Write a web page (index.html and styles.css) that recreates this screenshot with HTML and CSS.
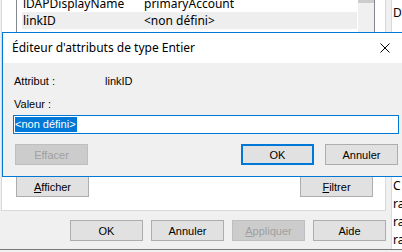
FILE: index.html
```html
<!DOCTYPE html>
<html lang="fr">
  <head>
    <meta charset="UTF-8" />
    <title>Éditeur d'attributs de type Entier</title>
    <link rel="stylesheet" href="styles.css">
  </head>
  <body>
    <div class="screen">
      <!-- Property window behind the dialog -->
      <div class="props">
        <div class="props-main">
          <div class="panel">
            <div class="list-wrap">
              <div class="list">
                <div class="row"><span class="col-name">lDAPDisplayName</span><span>primaryAccount</span></div>
                <div class="row selected"><span class="col-name">linkID</span><span>&lt;non défini&gt;</span></div>
              </div>
              <div class="scrollbar"><div class="thumb"></div></div>
            </div>
            <div class="panel-actions">
              <button class="btn"><u>A</u>fficher</button>
              <button class="btn"><u>F</u>iltrer</button>
            </div>
          </div>
          <div class="footer">
            <button class="btn">OK</button>
            <button class="btn">Annuler</button>
            <button class="btn disabled"><u>A</u>ppliquer</button>
            <button class="btn">Aide</button>
          </div>
        </div>
        <div class="side">
          <div class="side-text top">Do</div>
          <div class="side-text first">C</div>
          <div class="side-text">rat</div>
          <div class="side-text">rat</div>
          <div class="side-text">rat</div>
        </div>
      </div>

      <!-- Integer attribute editor dialog -->
      <div class="dialog">
        <div class="titlebar">
          <span class="title">Éditeur d'attributs de type Entier</span>
          <svg class="close" width="10" height="10" viewBox="0 0 10 10">
            <path d="M0.5 0.5 L9.5 9.5 M9.5 0.5 L0.5 9.5" stroke="#000" stroke-width="1" fill="none"/>
          </svg>
        </div>
        <div class="dialog-body">
          <div class="attr-row">
            <span class="attr-label">Attribut :</span>
            <span>linkID</span>
          </div>
          <div class="value-label">Valeur :</div>
          <div class="input"><span class="selection">&lt;non défini&gt;</span></div>
          <div class="dialog-actions">
            <button class="btn disabled">Effacer</button>
            <div class="spacer"></div>
            <button class="btn default">OK</button>
            <button class="btn">Annuler</button>
          </div>
        </div>
      </div>
    </div>
  </body>
</html>
```

FILE: styles.css
```css
body {
  margin: 0;
  padding: 0;
  font-family: 'Liberation Sans', Arial, sans-serif;
  font-size: 11px;
  color: #000;
  background: #f0f0f0;
  overflow: hidden;
}

.screen {
  position: relative;
  width: 402px;
  height: 252px;
  overflow: hidden;
}

/* Background property window */
.props {
  display: flex;
  height: 249px;
  border-bottom: 1px solid #7a7a7a;
}

.props-main {
  width: 386px;
  display: flex;
  flex-direction: column;
}

.panel {
  margin-left: 1px;
  height: 211px;
  background: #fff;
  border-left: 1px solid #d9d9d9;
  border-right: 1px solid #d9d9d9;
  border-bottom: 1px solid #d9d9d9;
  box-sizing: border-box;
  display: flex;
  flex-direction: column;
}

.list-wrap {
  margin-left: 14px;
  width: 357px;
  height: 174px;
  display: flex;
  border-left: 1px solid #828790;
  border-right: 1px solid #828790;
  overflow: hidden;
}

.list {
  flex: 1;
  padding-left: 5px;
  margin-top: -5px;
}

.row {
  display: flex;
  height: 17px;
  line-height: 17px;
  padding-left: 1px;
  font-family: 'Noto Sans', 'Liberation Sans', sans-serif;
  font-size: 12px;
}

.row.selected {
  background: #eeeeee;
}

.col-name {
  width: 121px;
}

.scrollbar {
  width: 16px;
  margin-left: 1px;
  background: #f0f0f0;
}

.thumb {
  height: 3px;
  background: #cdcdcd;
}

.panel-actions {
  display: flex;
  justify-content: space-between;
  padding: 2px 12px 0 14px;
}

.btn {
  width: 73px;
  height: 21px;
  padding: 0;
  font-family: inherit;
  font-size: 11px;
  color: #000;
  background: #e1e1e1;
  border: 1px solid #adadad;
  box-sizing: border-box;
}

.btn.disabled {
  background: #cccccc;
  border-color: #bfbfbf;
  color: #a0a0a0;
}

.btn.default {
  border: 2px solid #0078d7;
}

.footer {
  display: flex;
  gap: 8px;
  padding: 9px 0 0 70px;
}

.side {
  flex: 1;
  border-left: 1px solid #d9d9d9;
  margin-left: 5px;
  padding-left: 1px;
  background: #fff;
  font-family: 'Noto Sans', 'Liberation Sans', sans-serif;
  font-size: 12px;
}

.side-text {
  height: 18px;
  line-height: 18px;
  white-space: nowrap;
}

.side-text.top {
  margin-top: 4px;
}

.side-text.first {
  margin-top: 155px;
}

/* Dialog */
.dialog {
  position: absolute;
  left: 2px;
  top: 32px;
  width: 420px;
  height: 145px;
  box-sizing: border-box;
  border: 1px solid #0078d7;
  background: #f0f0f0;
}

.titlebar {
  height: 30px;
  background: #fff;
  display: flex;
  align-items: center;
  padding-left: 9px;
  font-family: 'Noto Sans', 'Liberation Sans', sans-serif;
  font-size: 12px;
}

.title {
  flex: 1;
  line-height: 16px;
}

.close {
  margin-right: 31px;
}

.dialog-body {
  padding: 10px 0 0 10px;
}

.attr-row {
  display: flex;
  height: 16px;
  line-height: 16px;
  padding-left: 1px;
}

.attr-label {
  width: 91px;
}

.value-label {
  margin-top: 7px;
  height: 16px;
  line-height: 16px;
  padding-left: 1px;
}

.input {
  margin-top: 3px;
  width: 386px;
  height: 19px;
  box-sizing: border-box;
  border: 1px solid #0078d7;
  background: #fff;
  padding: 1px 0 0 1px;
}

.selection {
  display: inline-block;
  height: 15px;
  line-height: 15px;
  background: #0078d7;
  color: #fff;
  padding-right: 1px;
}

.dialog-actions {
  display: flex;
  gap: 11px;
  margin-top: 10px;
  padding-left: 2px;
  width: 383px;
}

.spacer {
  flex: 1;
}
```
